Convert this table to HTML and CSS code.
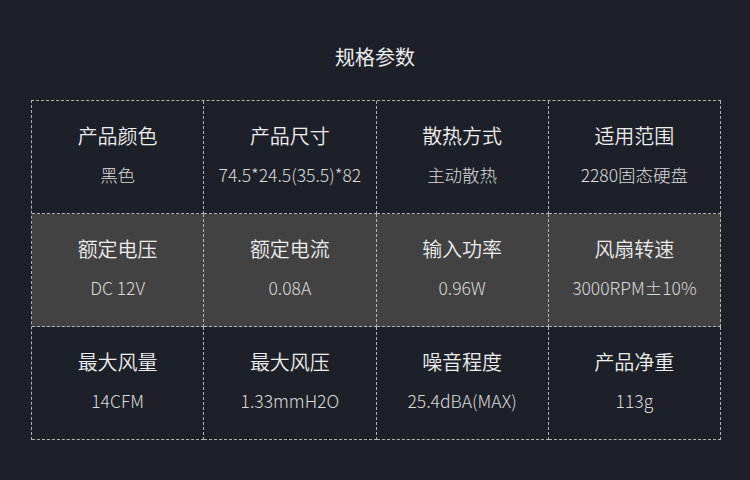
FILE: index.html
```html
<!DOCTYPE html>
<html lang="zh-CN">
<head>
<meta charset="utf-8">
<title>规格参数</title>
<link rel="stylesheet" href="styles.css">
</head>
<body>
<div class="page">
  <h1 class="title">规格参数</h1>
  <div class="specs">
    <div class="cell"><div class="label">产品颜色</div><div class="value">黑色</div></div>
    <div class="cell"><div class="label">产品尺寸</div><div class="value">74.5*24.5(35.5)*82</div></div>
    <div class="cell"><div class="label">散热方式</div><div class="value">主动散热</div></div>
    <div class="cell"><div class="label">适用范围</div><div class="value">2280固态硬盘</div></div>
    <div class="cell alt"><div class="label">额定电压</div><div class="value">DC 12V</div></div>
    <div class="cell alt"><div class="label">额定电流</div><div class="value">0.08A</div></div>
    <div class="cell alt"><div class="label">输入功率</div><div class="value">0.96W</div></div>
    <div class="cell alt"><div class="label">风扇转速</div><div class="value">3000RPM±10%</div></div>
    <div class="cell"><div class="label">最大风量</div><div class="value">14CFM</div></div>
    <div class="cell"><div class="label">最大风压</div><div class="value">1.33mmH2O</div></div>
    <div class="cell"><div class="label">噪音程度</div><div class="value">25.4dBA(MAX)</div></div>
    <div class="cell"><div class="label">产品净重</div><div class="value">113g</div></div>
  </div>
</div>
</body>
</html>
```
FILE: styles.css
```css
html, body {
  margin: 0;
  padding: 0;
  background: #1e2029;
}
body {
  font-family: "Noto Sans CJK SC", "Noto Sans", sans-serif;
  color: #e8e8e8;
  width: 750px;
  height: 480px;
  overflow: hidden;
}
.page {
  padding-top: 42px;
}
.title {
  margin: 0;
  text-align: center;
  font-size: 20px;
  line-height: 30px;
  font-weight: 400;
  color: #ececec;
}
.specs {
  margin: 28px 0 0 31px;
  width: 690px;
  display: grid;
  grid-template-columns: repeat(4, 1fr);
  border-top: 1px dashed #b4b4b4;
  border-left: 1px dashed #b4b4b4;
  box-sizing: border-box;
}
.cell {
  height: 113px;
  box-sizing: border-box;
  border-right: 1px dashed #b4b4b4;
  border-bottom: 1px dashed #b4b4b4;
  display: flex;
  flex-direction: column;
  align-items: center;
  justify-content: center;
  gap: 15px;
  padding-bottom: 3px;
}
.cell.alt {
  background: #424242;
}
.label {
  font-size: 20px;
  line-height: 24px;
  font-weight: 350;
  color: #ededed;
}
.value {
  font-size: 17.5px;
  line-height: 24px;
  font-weight: 300;
  color: #dadada;
}
```
